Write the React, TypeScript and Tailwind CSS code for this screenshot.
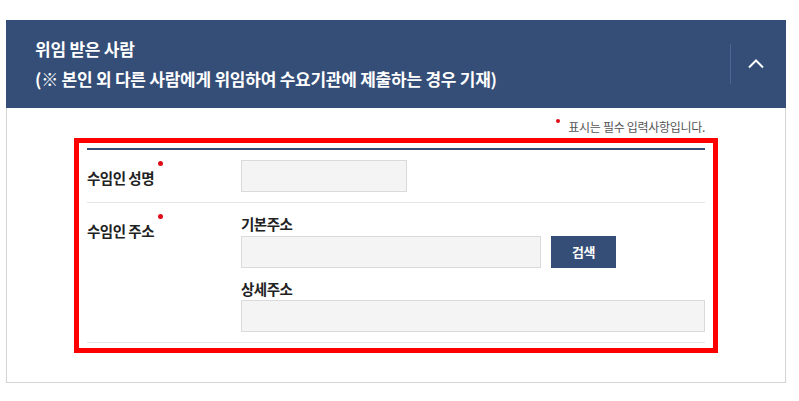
function Req() {
  return (
    <span className="absolute -right-[9px] -top-[7px] w-[5px] h-[5px] rounded-full bg-[#e10b17]"></span>
  );
}

function Field({ w }: { w: string }) {
  return <div className={`h-[32px] bg-[#f4f4f4] border border-[#dadada] ${w}`}></div>;
}

export default function App() {
  return (
    <div
      className="w-[799px] h-[401px] bg-white pt-[20px] pl-[6px]"
      style={{ fontFamily: '"Noto Sans CJK KR", "Noto Sans", sans-serif' }}
    >
      <div className="w-[780px]">
        {/* header */}
        <div className="h-[88px] bg-[#344e78] flex items-center">
          <div className="flex-1 pl-[29px] text-white font-bold text-[17px] leading-[30px] tracking-[-0.25px]">
            <div>위임 받은 사람</div>
            <div>(※ 본인 외 다른 사람에게 위임하여 수요기관에 제출하는 경우 기재)</div>
          </div>
          <div className="w-px h-[40px] bg-[#4d6590]"></div>
          <button className="w-[55px] h-[40px] flex items-center justify-center pr-[5px]">
            <svg width="16" height="10" viewBox="0 0 16 10" fill="none">
              <polyline points="1,8.5 8,1.5 15,8.5" stroke="white" strokeWidth="2" />
            </svg>
          </button>
        </div>

        {/* body */}
        <div className="border border-t-0 border-[#d5d5d5] pt-[11px] pb-[29px]">
          <div className="w-[618px] mx-auto flex justify-end items-start h-[16px] mb-[3px]">
            <span className="w-[4px] h-[4px] mr-[8px] rounded-full bg-[#e10b17]"></span>
            <span className="text-[12px] leading-[16px] tracking-[-0.3px] text-[#555]">
              표시는 필수 입력사항입니다.
            </span>
          </div>

          <div className="w-[644px] mx-auto border-[5px] border-[#ff0000] px-[8px] py-[5px]">
            <div className="border-t-2 border-[#344e78] text-[#222] text-[14.5px] font-bold tracking-[-0.5px]">
              {/* 수임인 성명 */}
              <div className="flex border-b border-[#e6e6e6]">
                <div className="w-[154px] pt-[17px]">
                  <span className="relative inline-block leading-[20px]">
                    수임인 성명
                    <Req />
                  </span>
                </div>
                <div className="py-[10px]">
                  <Field w="w-[166px]" />
                </div>
              </div>

              {/* 수임인 주소 */}
              <div className="flex border-b border-[#e6e6e6]">
                <div className="w-[154px] pt-[17px]">
                  <span className="relative inline-block leading-[20px]">
                    수임인 주소
                    <Req />
                  </span>
                </div>
                <div className="flex-1 pt-[11px] pb-[10px]">
                  <div className="leading-[20px] mb-[2px]">기본주소</div>
                  <div className="flex gap-[10px]">
                    <Field w="w-[300px]" />
                    <button className="w-[65px] h-[32px] bg-[#344e78] text-white text-[13px] font-bold">
                      검색
                    </button>
                  </div>
                  <div className="leading-[20px] mt-[11px] mb-[1px]">상세주소</div>
                  <Field w="w-full" />
                </div>
              </div>
            </div>
          </div>
        </div>
      </div>
    </div>
  );
}
